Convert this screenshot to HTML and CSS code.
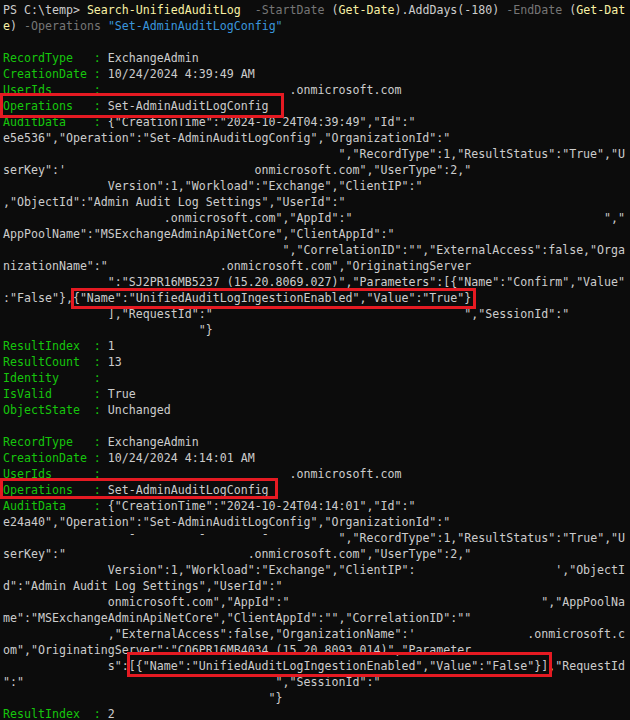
FILE: index.html
```html
<!DOCTYPE html>
<html>
<head>
<meta charset="utf-8">
<link rel="stylesheet" href="styles.css">
</head>
<body>
<div class="term">
<pre class="out">PS C:\temp&gt; <span class="y">Search-UnifiedAuditLog</span>  <span class="g">-StartDate</span> (<span class="y">Get-Date</span>).AddDays(-180) <span class="g">-EndDate</span> (<span class="y">Get-Dat</span>
<span class="y">e</span>) <span class="g">-Operations</span> <span class="b">"Set-AdminAuditLogConfig"</span>

<span class="k">RecordType   :</span> ExchangeAdmin
<span class="k">CreationDate :</span> 10/24/2024 4:39:49 AM
<span class="k">UserIds      :</span>                           .onmicrosoft.com
<span class="k">Operations   :</span> Set-AdminAuditLogConfig
<span class="k">AuditData    :</span> {"CreationTime":"2024-10-24T04:39:49","Id":"
e5e536","Operation":"Set-AdminAuditLogConfig","OrganizationId":"
                                                ","RecordType":1,"ResultStatus":"True","U
serKey":'                           onmicrosoft.com","UserType":2,"
               Version":1,"Workload":"Exchange","ClientIP":"
,"ObjectId":"Admin Audit Log Settings","UserId":"
                       .onmicrosoft.com","AppId":"                                    ","
AppPoolName":"MSExchangeAdminApiNetCore","ClientAppId":"
                                        ","CorrelationID":"","ExternalAccess":false,"Orga
nizationName":"                .onmicrosoft.com","OriginatingServer
               ":"SJ2PR16MB5237 (15.20.8069.027)","Parameters":[{"Name":"Confirm","Value"
:"False"},{"Name":"UnifiedAuditLogIngestionEnabled","Value":"True"}
               ],"RequestId":"                                    ","SessionId":"
                            "}
<span class="k">ResultIndex  :</span> 1
<span class="k">ResultCount  :</span> 13
<span class="k">Identity     :</span>
<span class="k">IsValid      :</span> True
<span class="k">ObjectState  :</span> Unchanged

<span class="k">RecordType   :</span> ExchangeAdmin
<span class="k">CreationDate :</span> 10/24/2024 4:14:01 AM
<span class="k">UserIds      :</span>                           .onmicrosoft.com
<span class="k">Operations   :</span> Set-AdminAuditLogConfig
<span class="k">AuditData    :</span> {"CreationTime":"2024-10-24T04:14:01","Id":"
e24a40","Operation":"Set-AdminAuditLogConfig","OrganizationId":"
                  <span class="hi">-</span>         <span class="hi">-</span>        <span class="hi">-</span>          ","RecordType":1,"ResultStatus":"True","U
serKey":"                          .onmicrosoft.com","UserType":2,"
               Version":1,"Workload":"Exchange","ClientIP":                    ',"ObjectI
d":"Admin Audit Log Settings","UserId":"
               onmicrosoft.com","AppId":"                                    ","AppPoolNa
me":"MSExchangeAdminApiNetCore","ClientAppId":"","CorrelationID":""
               ,"ExternalAccess":false,"OrganizationName":'                .onmicrosoft.c
om","OriginatingServer":"CO6PR16MB4034 (15.20.8093.014)","Parameter
               s":[{"Name":"UnifiedAuditLogIngestionEnabled","Value":"False"}],"RequestId
":"                                    ","SessionId":"
                                      "}
<span class="k">ResultIndex  :</span> 2</pre>
<div class="box box1"></div>
<div class="box box2"></div>
<div class="box box3"></div>
<div class="box box4"></div>
</div>
</body>
</html>
```

FILE: styles.css
```css
html, body {
  margin: 0;
  padding: 0;
  background: #0c0c0c;
  width: 630px;
  height: 720px;
  overflow: hidden;
}

.term {
  position: relative;
  width: 630px;
  height: 720px;
  background: #0c0c0c;
}

.out {
  margin: 0;
  padding: 2px 0 0 3px;
  font-family: "DejaVu Sans Mono", "Liberation Mono", monospace;
  font-size: 11.627px;
  line-height: 16px;
  color: #cccccc;
  white-space: pre;
}

.k { color: #16c60c; }
.y { color: #f9f1a5; }
.g { color: #767676; }
.b { color: #3a96dd; }
.hi { color: #cccccc; position: relative; top: -4px; }

.box {
  position: absolute;
  border: 3px solid #e51a22;
  box-sizing: border-box;
}

.box1 { left: 0; top: 93px; width: 284px; height: 25px; }
.box2 { left: 71px; top: 288px; width: 405px; height: 21px; }
.box3 { left: 0; top: 478px; width: 278px; height: 21px; }
.box4 { left: 127px; top: 652px; width: 425px; height: 25px; }
```
